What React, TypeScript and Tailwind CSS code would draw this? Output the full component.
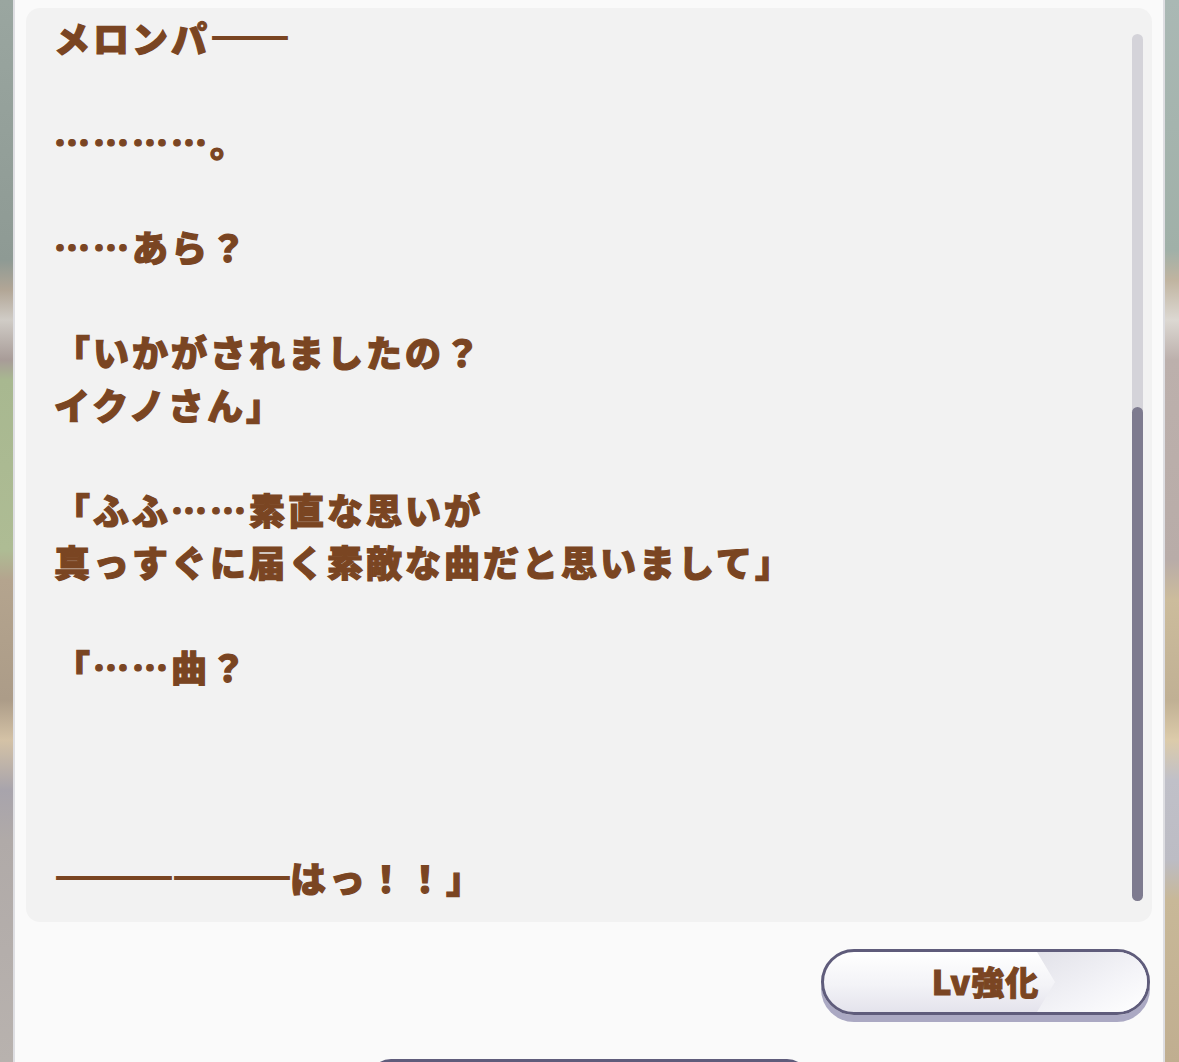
const lines: string[][] = [
  ["メロンパ", "――"],
  [],
  ["…………。"],
  [],
  ["……あら？"],
  [],
  ["「いかがされましたの？"],
  ["イクノさん」"],
  [],
  ["「ふふ……素直な思いが"],
  ["真っすぐに届く素敵な曲だと思いまして」"],
  [],
  ["「……曲？"],
  [],
  [],
  [],
  ["――――――", "はっ！！」"],
];

function App() {
  return (
    <div
      className="flex h-[1062px] w-[1179px] overflow-hidden bg-[#fafafa]"
      style={{ fontFamily: '"Noto Sans CJK JP", "Noto Sans", sans-serif' }}
    >
      {/* blurred scenery on the left */}
      <div className="w-[13px] shrink-0 bg-[linear-gradient(to_bottom,#9aa6a0_0px,#8e9a94_260px,#b2a696_290px,#d0ccc6_320px,#a89c98_360px,#a8b890_380px,#aebc94_550px,#b4a48e_580px,#ac9c88_700px,#d4c2a6_740px,#a8a4ac_790px,#b0aaa8_840px,#b8b2ae_1062px)]" />
      <div className="w-[2px] shrink-0 bg-[#dedee2]" />

      <div className="flex flex-1 flex-col bg-[#fafafa] px-[11px] pt-[8px]">
        {/* story text panel */}
        <div className="relative h-[914px] shrink-0 rounded-[14px] bg-[#f2f2f2] pl-[28px] pt-[2px]">
          <div className="text-[36px] font-black leading-[52.5px] tracking-[3px] text-[#7a4522] [-webkit-text-stroke:1.2px_#7a4522]">
            {lines.map((parts, i) => (
              <div key={i} className="h-[52.5px] whitespace-pre">
                {parts.map((p, j) =>
                  p.startsWith("―") ? (
                    <span
                      key={j}
                      className="text-[40px] tracking-[-2px] [font-feature-settings:'liga'_0,'calt'_0,'dlig'_0] [-webkit-text-stroke:1.8px_#7a4522]"
                    >
                      {p}
                    </span>
                  ) : (
                    <span key={j}>{p}</span>
                  )
                )}
              </div>
            ))}
          </div>

          {/* scrollbar */}
          <div className="absolute right-[9px] top-[26px] bottom-[21px] w-[11px] rounded-full bg-[#d4d3d9]">
            <div className="absolute bottom-0 left-0 h-[494px] w-[11px] rounded-full bg-[#7e7b8f]" />
          </div>
        </div>

        <div className="mt-[27px] flex shrink-0 justify-end pr-[2px]">
          <button className="relative h-[66px] w-[329px] shrink-0 overflow-hidden rounded-full border-[3px] border-[#5f5c7b] bg-[linear-gradient(to_bottom,#ffffff,#f3f3f7_55%,#e4e3ec)] shadow-[0_7px_0_#aba9c3]">
            <svg
              className="absolute right-0 top-0 h-full w-[110px]"
              viewBox="0 0 110 60"
              preserveAspectRatio="none"
            >
              <defs>
                <linearGradient id="hl" x1="0" y1="0" x2="1" y2="1">
                  <stop offset="0" stopColor="#e2e2e9" />
                  <stop offset="0.6" stopColor="#f4f4f8" />
                  <stop offset="1" stopColor="#ffffff" />
                </linearGradient>
              </defs>
              <polygon points="0,0 110,0 110,60 0,60 18,30" fill="url(#hl)" />
            </svg>
            <span className="relative text-[33px] font-black tracking-[1px] text-[#7a4522] [-webkit-text-stroke:1px_#7a4522]">
              Lv強化
            </span>
          </button>
        </div>

        <div className="mt-[44px] flex shrink-0 justify-center">
          <div className="h-[40px] w-[440px] shrink-0 rounded-t-[22px] border-[3px] border-[#5f5c7b] bg-[linear-gradient(to_bottom,#ffffff,#ececf2)]" />
        </div>
      </div>

      <div className="w-[2px] shrink-0 bg-[#dedee2]" />
      {/* blurred scenery on the right */}
      <div className="w-[14px] shrink-0 bg-[linear-gradient(to_bottom,#aab8b4_0px,#a0b0a8_250px,#c0b4a0_280px,#dcd8d2_320px,#bcb0ac_360px,#b8aca8_560px,#ccbc9c_600px,#c0b094_700px,#dccbaa_740px,#c0c0c8_780px,#bcbcc4_860px,#c8b898_900px,#c0ae90_1062px)]" />
    </div>
  );
}

export default App;
